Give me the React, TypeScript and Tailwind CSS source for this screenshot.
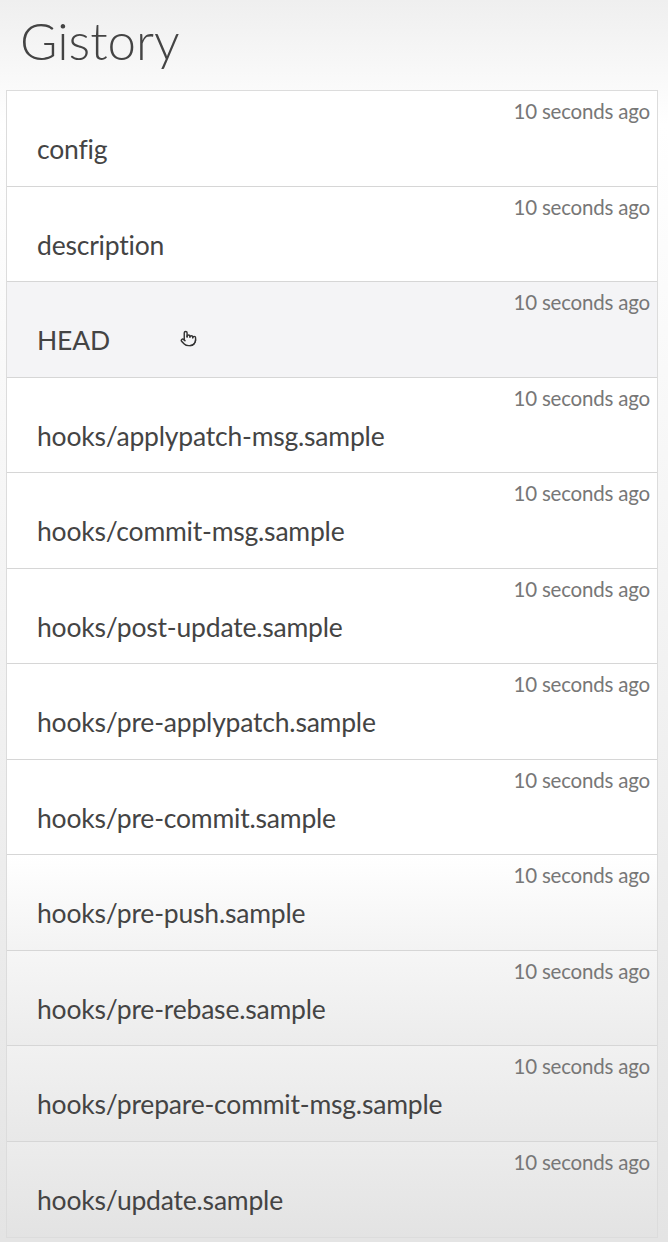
import { Pointer } from "lucide-react";

const files = [
  "config",
  "description",
  "HEAD",
  "hooks/applypatch-msg.sample",
  "hooks/commit-msg.sample",
  "hooks/post-update.sample",
  "hooks/pre-applypatch.sample",
  "hooks/pre-commit.sample",
  "hooks/pre-push.sample",
  "hooks/pre-rebase.sample",
  "hooks/prepare-commit-msg.sample",
  "hooks/update.sample",
];

const rowBg = [
  "bg-white",
  "bg-white",
  "bg-[#f4f4f6]",
  "bg-white",
  "bg-white",
  "bg-white",
  "bg-white",
  "bg-white",
  "bg-gradient-to-b from-white to-[#f3f3f3]",
  "bg-gradient-to-b from-[#f6f6f6] to-[#ececec]",
  "bg-gradient-to-b from-[#f1f1f1] to-[#e8e8e8]",
  "bg-gradient-to-b from-[#ececec] to-[#e3e3e3]",
];

export default function App() {
  return (
    <div className="min-h-[1242px] w-[668px] bg-gradient-to-b from-[#efefef] via-white via-10% to-[#e4e4e4] font-['Lato','Liberation_Sans',sans-serif]">
      <h1 className="h-[90px] pl-[20px] pt-[6px] text-[51px] font-light leading-[70px] text-[#444]">
        Gistory
      </h1>

      <ul className="ml-[6px] w-[652px] border border-[#dcdcdc]">
        {files.map((name, i) => (
          <li
            key={name}
            className={`relative flex h-[95.5px] flex-col border-b border-[#d6d6d6] last:border-b-0 ${rowBg[i]}`}
          >
            <div className="pr-[7px] pt-[9px] text-right text-[20.5px] leading-[22px] tracking-[-0.2px] text-[#777]">
              10 seconds ago
            </div>
            <div className="flex items-center pl-[30px] pt-[12px] text-[26.5px] leading-[30px] tracking-[-0.2px] text-[#444]">
              {name}
              {name === "HEAD" && (
                <Pointer
                  size={17}
                  strokeWidth={2}
                  className="absolute left-[173px] top-[48px] text-[#333]"
                />
              )}
            </div>
          </li>
        ))}
      </ul>
    </div>
  );
}
